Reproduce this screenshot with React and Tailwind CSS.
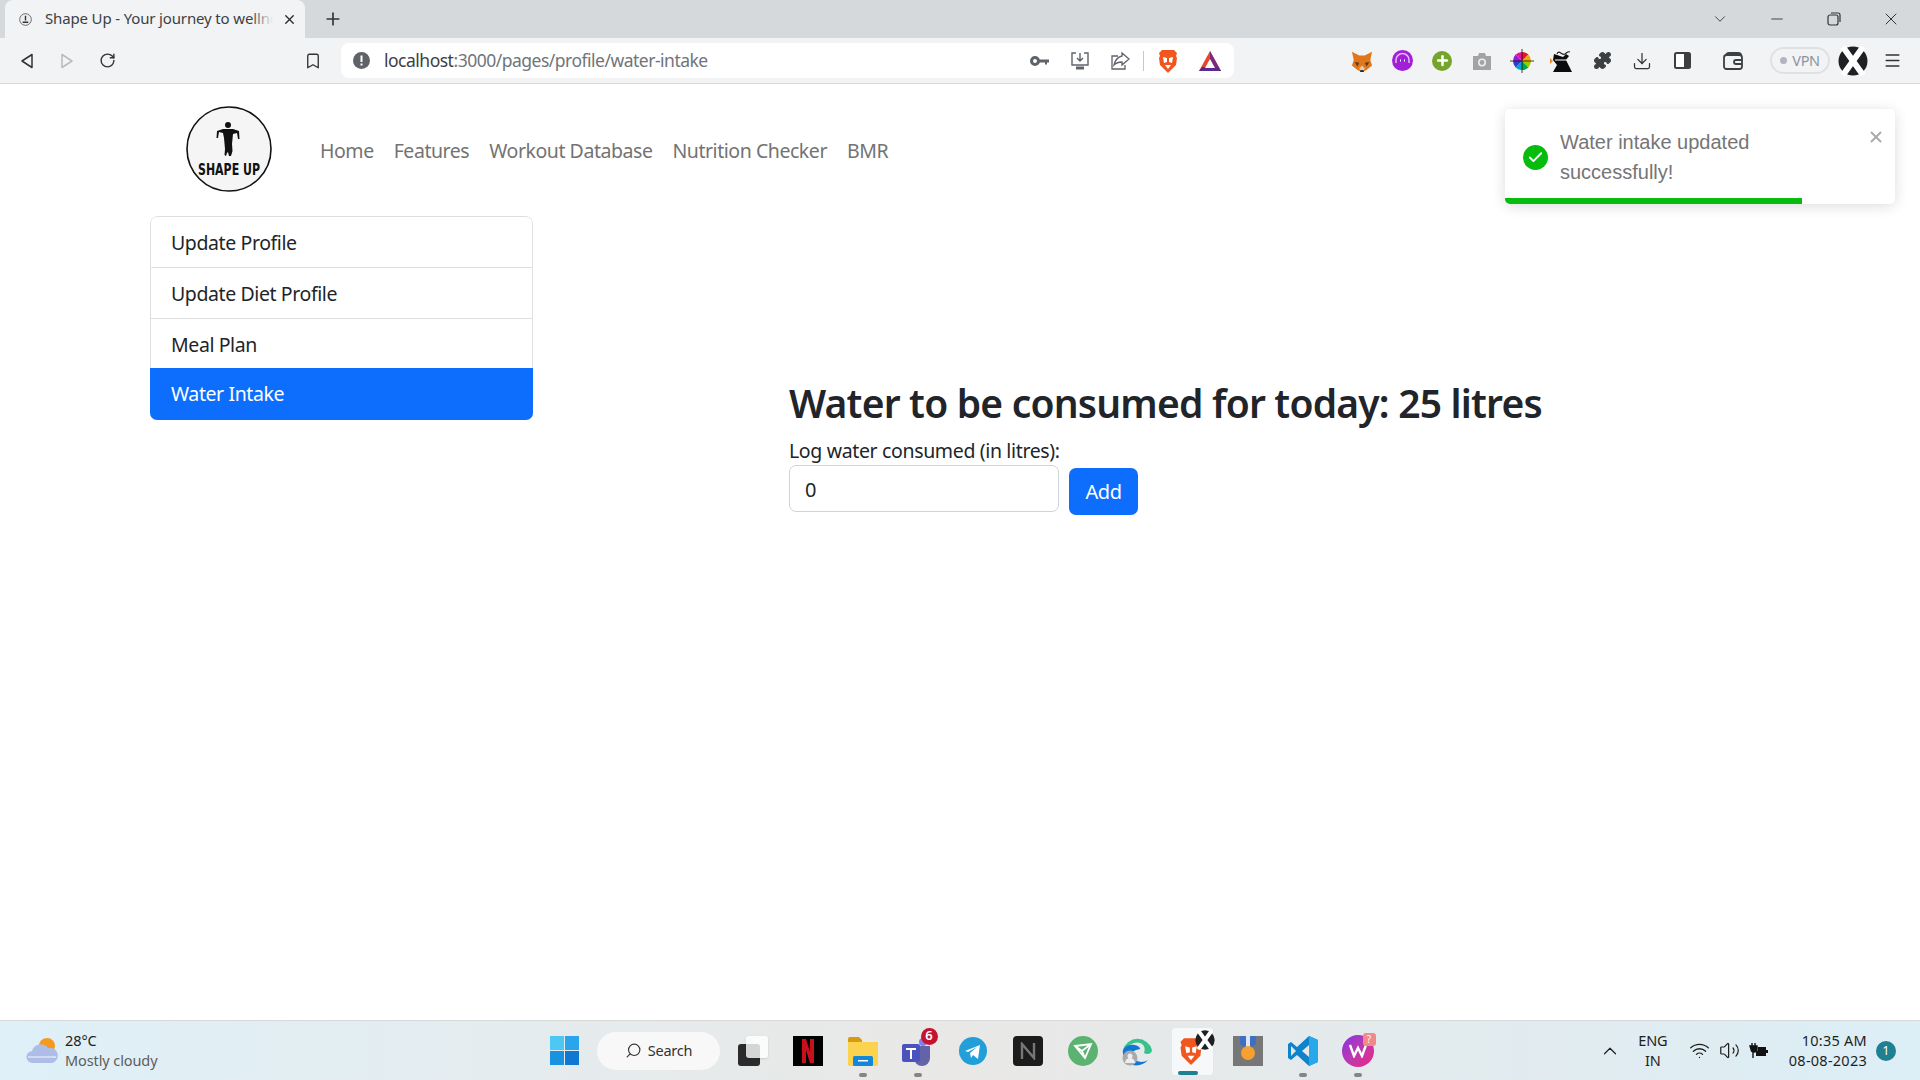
import { X, Plus, Minus, ChevronDown, ChevronUp, RotateCw, Bookmark, Download, Puzzle, Search, Wifi, Volume2, Menu, Check } from "lucide-react";

const uiFont = { fontFamily: '"Noto Sans", sans-serif' };

function Cell({ children, className = "w-[40px]" }) {
  return <div className={`${className} flex shrink-0 items-center justify-center`}>{children}</div>;
}

function Lion({ size = 24 }) {
  return (
    <svg width={size} height={size} viewBox="0 0 24 24">
      <path d="M6 1h12l3 3-1 3 1 2-1 7-8 8-8-8-1-7 1-2-1-3z" fill="#f1561f" />
      <path d="M7 8l4 1v4l-3 1zM17 8l-4 1v4l3 1zM9 16h6l-3 4z" fill="#fff" />
    </svg>
  );
}

function Bat() {
  return (
    <svg width="24" height="24" viewBox="0 0 24 24">
      <path d="M12 2l11 20H1z" fill="#e8462b" />
      <path d="M12 2l11 20h-6L12 11z" fill="#7b2a78" />
      <path d="M1 22l3-4h16l3 4z" fill="#5b2a8c" />
      <path d="M12 10l5 9H7z" fill="#fff" />
    </svg>
  );
}

function Fox() {
  return (
    <svg width="22" height="22" viewBox="0 0 24 24">
      <path d="M1 2l8 4h6l8-4-2 9 2 6-5 4-3 2h-6l-3-2-5-4 2-6z" fill="#e2761b" />
      <path d="M4 13l5 1-2 4zM20 13l-5 1 2 4z" fill="#5c3a21" />
      <path d="M9 20l3-3 3 3-1 3h-4z" fill="#e4c9a8" />
      <path d="M10 22h4v2h-4z" fill="#222" />
    </svg>
  );
}

function Avatar({ size = 30 }) {
  return (
    <svg width={size} height={size} viewBox="0 0 30 30">
      <circle cx="15" cy="15" r="14.5" fill="#1f2024" />
      <path d="M5 1l20 28M25 1L5 29" stroke="#fff" strokeWidth="6" />
    </svg>
  );
}

function Logo() {
  return (
    <svg width="86" height="86" viewBox="0 0 86 86" className="shrink-0">
      <circle cx="43" cy="43" r="42" fill="#f5f5f5" stroke="#111" strokeWidth="1.6" />
      <circle cx="42" cy="19" r="3" fill="#111" />
      <path d="M31 25l6-2h10l6 2 .5 8h-1.5l-1-6-4 1-1 10 .5 7-1.500 5h-2l-1-4-1 1-1 3-1.500-1 .5-6-1-11-1-5-4-1-1 6h-1.500z" fill="#111" />
      <text x="43" y="69" textAnchor="middle" fontFamily='"DejaVu Sans", sans-serif' fontWeight="700" fontSize="16" textLength="62" lengthAdjust="spacingAndGlyphs" fill="#111">
        SHAPE UP
      </text>
    </svg>
  );
}

function TabBar() {
  return (
    <div className="flex h-[38px] shrink-0 items-end bg-[#d5d9dc] pl-[5px]">
      <div className="flex h-[38px] w-[300px] items-center rounded-t-lg bg-[#f2f3f4] pl-[14px]">
        <svg width="13" height="13" viewBox="0 0 14 14" className="shrink-0">
          <circle cx="7" cy="7" r="6.300" fill="#eee" stroke="#666" />
          <path d="M7 3v5M4 10h6" stroke="#333" strokeWidth="1.500" />
        </svg>
        <div className="relative -mt-[2px] ml-[13px] w-[228px] overflow-hidden whitespace-nowrap text-[15px] tracking-[-0.15px] text-[#3c4043]">
          Shape Up - Your journey to wellness
          <div className="absolute inset-y-0 right-0 w-[22px] bg-gradient-to-r from-transparent to-[#f2f3f4]" />
        </div>
        <X size={15} strokeWidth={2.2} className="ml-[9px] text-[#2b2b2b]" />
      </div>
      <Cell className="h-[38px] w-[56px]">
        <Plus size={20} strokeWidth={2} className="text-[#333]" />
      </Cell>
      <div className="ml-auto flex h-[38px] items-center text-[#333]">
        <Cell className="w-[56px]"><ChevronDown size={18} strokeWidth={1.200} /></Cell>
        <Cell className="w-[57px]"><Minus size={18} strokeWidth={1.200} /></Cell>
        <Cell className="w-[57px]">
          <svg width="14" height="14" viewBox="0 0 14 14" fill="none" stroke="#333" strokeWidth="1.200">
            <rect x="1" y="3" width="10" height="10" rx="2" />
            <path d="M4 1h7a2 2 0 0 1 2 2v7" />
          </svg>
        </Cell>
        <Cell className="w-[58px]"><X size={20} strokeWidth={1.200} /></Cell>
      </div>
    </div>
  );
}

function ToolBar() {
  return (
    <div className="flex h-[46px] shrink-0 items-center border-b border-[#d8d8d8] bg-[#f2f3f4] pl-[7px] text-[#3c4043]">
      <Cell>
        <svg width="14" height="16" viewBox="0 0 14 16" fill="none" stroke="#333" strokeWidth="1.500" strokeLinejoin="round"><path d="M12 1.500v13L2 8z" /></svg>
      </Cell>
      <Cell>
        <svg width="14" height="16" viewBox="0 0 14 16" fill="none" stroke="#bbb" strokeWidth="1.500" strokeLinejoin="round"><path d="M2 1.500v13L12 8z" /></svg>
      </Cell>
      <Cell><RotateCw size={17} strokeWidth={2} className="text-[#333]" /></Cell>
      <div className="w-[166px] shrink-0" />
      <Cell><Bookmark size={18} strokeWidth={1.800} className="text-[#333]" /></Cell>
      <div className="ml-[8px] flex h-[35px] w-[893px] shrink-0 items-center rounded-lg bg-white pl-[12px]">
        <svg width="17" height="17" viewBox="0 0 17 17" className="shrink-0">
          <circle cx="8.500" cy="8.500" r="8.500" fill="#5f6368" />
          <path d="M8.500 3.500v6.500M8.500 11.500v2" stroke="#fff" strokeWidth="2" />
        </svg>
        <div className="ml-[14px] whitespace-nowrap text-[17.500px] tracking-[-0.5px] text-[#70757a]">
          <span className="text-[#3c4043]">localhost</span>:3000/pages/profile/water-intake
        </div>
        <div className="ml-auto flex items-center pr-[3px]">
          <Cell>
            <svg width="20" height="12" viewBox="0 0 20 12"><circle cx="5" cy="6" r="3.500" fill="none" stroke="#5f6368" strokeWidth="3" /><path d="M8 4.500h11v3h-2v2h-2v-2H8z" fill="#5f6368" /></svg>
          </Cell>
          <Cell>
            <svg width="20" height="20" viewBox="0 0 20 20" fill="none" stroke="#5f6368" strokeWidth="1.400"><path d="M6 2H2v12h16V2h-4M10 2v8M7 7l3 3 3-3" /><path d="M6 17h8" strokeWidth="3" /></svg>
          </Cell>
          <Cell>
            <svg width="20" height="20" viewBox="0 0 20 20" fill="none" stroke="#5f6368" strokeWidth="1.300"><path d="M8 5H2v13h13v-4M12 2l7 6-7 6v-3c-4 0-6 1-8 3 1-5 4-8 8-9z" /></svg>
          </Cell>
          <div className="mx-[3px] h-[20px] w-px bg-[#c8c8c8]" />
          <Cell className="w-[42px]"><Lion /></Cell>
          <Cell className="w-[42px]"><Bat /></Cell>
        </div>
      </div>
      <div className="w-[108px] shrink-0" />
      <Cell><Fox /></Cell>
      <Cell>
        <svg width="21" height="21" viewBox="0 0 21 21">
          <circle cx="10.500" cy="10.500" r="10.500" fill="#a11fd6" />
          <path d="M4 13V10a6.500 6.500 0 0 1 13 0v3" fill="none" stroke="#e7b8fb" strokeWidth="1.500" />
          <path d="M8 10.500h1M12 10.500h1" stroke="#fff" strokeWidth="1.800" />
        </svg>
      </Cell>
      <Cell><div className="flex size-[20px] items-center justify-center rounded-full bg-[#74a52a]"><Plus size={15} strokeWidth={4} className="text-white" /></div></Cell>
      <Cell>
        <svg width="20" height="18" viewBox="0 0 20 18"><path d="M1 4h5l1-3h6l1 3h5v14H1z" fill="#a3a3a3" /><circle cx="10" cy="10.500" r="4" fill="#eee" /><circle cx="10" cy="10.500" r="2.400" fill="#a3a3a3" /></svg>
      </Cell>
      <Cell>
        <svg width="24" height="24" viewBox="0 0 24 24">
          <path d="M12 12V3a9 9 0 0 1 6.400 2.600z" fill="#e6162d" />
          <path d="M12 12l6.400-6.400A9 9 0 0 1 21 12z" fill="#f5a400" />
          <path d="M12 12h9a9 9 0 0 1-2.600 6.400z" fill="#9acd00" />
          <path d="M12 12l6.400 6.400A9 9 0 0 1 12 21z" fill="#00a651" />
          <path d="M12 12v9a9 9 0 0 1-6.400-2.600z" fill="#00a3d9" />
          <path d="M12 12l-6.400 6.400A9 9 0 0 1 3 12z" fill="#2a3fd1" />
          <path d="M12 12H3a9 9 0 0 1 2.600-6.400z" fill="#8f1fd1" />
          <path d="M12 12L5.600 5.600A9 9 0 0 1 12 3z" fill="#e015a6" />
          <path d="M12 0v24M0 12h24" stroke="#111" strokeWidth="0.800" />
        </svg>
      </Cell>
      <Cell>
        <svg width="24" height="24" viewBox="0 0 24 24">
          <path d="M0 9l3 3-3 3z" fill="#f08a24" />
          <path d="M4 5l9 3 3-3 3 2-3 4 6 12H3l4-7-4-5z" fill="#0c0c0c" />
          <path d="M5 11h12" stroke="#fff" strokeWidth="1" />
          <path d="M7 5c2-5 5 2 8 0s3-3 5-2" fill="none" stroke="#222" strokeWidth="1.200" />
        </svg>
      </Cell>
      <Cell><Puzzle size={19} fill="#3c4043" strokeWidth={1.500} /></Cell>
      <Cell><Download size={20} strokeWidth={1.500} className="text-[#333]" /></Cell>
      <Cell>
        <svg width="17" height="17" viewBox="0 0 17 17"><rect x="1" y="1" width="15" height="15" rx="1.500" fill="#fff" stroke="#3c4043" strokeWidth="2" /><rect x="10" y="1" width="6" height="15" fill="#3c4043" /></svg>
      </Cell>
      <div className="w-[11px] shrink-0" />
      <Cell>
        <svg width="20" height="18" viewBox="0 0 20 18" fill="none" stroke="#3c4043" strokeWidth="1.800"><rect x="1" y="3" width="18" height="14" rx="2.500" /><path d="M3 3c0-1 1-2 3-2h9c2 0 3 1 3 2M19 8h-6a2 2 0 0 0 0 4h6" /></svg>
      </Cell>
      <div className="ml-[17px] flex h-[27px] w-[60px] shrink-0 items-center justify-center gap-[5px] rounded-full border-2 border-[#dfe1e3] text-[14.500px] tracking-[-0.4px] text-[#8a93a3]">
        <span className="size-[7px] rounded-full bg-[#b0b5c0]" />VPN
      </div>
      <div className="ml-[3px]"><Cell><Avatar /></Cell></div>
      <Cell className="w-[39px]"><Menu size={19} strokeWidth={1.800} className="text-[#333]" /></Cell>
    </div>
  );
}

function Toast() {
  return (
    <div className="absolute right-[25px] top-[25px] flex h-[95px] w-[390px] overflow-hidden rounded-[5px] bg-white shadow-[0_2px_14px_rgba(0,0,0,0.14)]" style={{ fontFamily: '"Liberation Sans", Arial, sans-serif' }}>
      <div className="flex h-[89px] w-full pl-[18px]">
        <div className="mt-[36px] flex size-[25px] shrink-0 items-center justify-center rounded-full bg-[#07bc0c]">
          <Check size={17} strokeWidth={2.600} className="text-white" />
        </div>
        <div className="ml-[12px] mt-[18px] w-[250px] text-[20px] leading-[30px] text-[#757575]">
          Water intake updated successfully!
        </div>
        <X size={18} strokeWidth={2.600} className="ml-auto mr-[10px] mt-[19px] text-[#aaaaaa]" />
      </div>
      <div className="absolute bottom-0 left-0 h-[6px] w-[297px] bg-[#07bc0c]" />
    </div>
  );
}

function SideMenu() {
  const items = ["Update Profile", "Update Diet Profile", "Meal Plan"];
  return (
    <div className="h-[204px] w-[383px] shrink-0 overflow-hidden rounded-[7px] text-[19.500px] tracking-[-0.4px] text-[#212529]">
      {items.map((item, i) => (
        <div key={item} className={`flex items-center border-x border-[#dfdfdf] pl-[20px] pt-[2px] ${i === 0 ? "border-t" : ""} ${i < 2 ? "border-b" : ""} ${i === 0 ? "h-[52px] rounded-t-[7px]" : i === 1 ? "h-[51px]" : "h-[49px]"}`}>
          {item}
        </div>
      ))}
      <div className="flex h-[52px] items-center bg-[#0d6efd] pl-[21px] text-white">Water Intake</div>
    </div>
  );
}

function WaterForm() {
  return (
    <div className="ml-[256px] mt-[163px] text-[#212529]">
      <h2 className="whitespace-nowrap text-[39px] font-semibold leading-[48px] tracking-[-0.8px]">Water to be consumed for today: 25 litres</h2>
      <div className="mt-[12px] text-[19.500px] leading-[24px] tracking-[-0.35px]">Log water consumed (in litres):</div>
      <div className="mt-[2px] flex items-start">
        <div className="flex h-[47px] w-[270px] items-center rounded-[7px] border border-[#ced4da] pl-[15px] pt-[2px] text-[20px]">0</div>
        <button className="ml-[10px] mt-[3px] h-[47px] w-[69px] rounded-[7px] bg-[#0d6efd] pt-[1px] text-[20px] tracking-[-0.5px] text-white">Add</button>
      </div>
    </div>
  );
}

function Pill() {
  return <div className="mx-auto mt-[1px] h-[4px] w-[8px] rounded-full bg-[#858585]" />;
}

function TaskIcon({ children, pill }) {
  return (
    <div className="relative flex h-[58px] w-[55px] shrink-0 items-center justify-center">
      {children}
      {pill && <div className="absolute bottom-[3px] left-0 right-0"><Pill /></div>}
    </div>
  );
}

function TaskBar() {
  return (
    <div className="flex h-[60px] shrink-0 items-center border-t border-[#d9d9d9] bg-gradient-to-r from-[#dff0f8] via-[#e9e8e6] to-[#dceef6]">
      <div className="flex w-[550px] shrink-0 items-center pl-[26px]">
        <svg width="32" height="30" viewBox="0 0 32 30">
          <circle cx="21" cy="10" r="8" fill="#f39a1f" />
          <path d="M7 27a6 6 0 0 1-1-12 9 9 0 0 1 16-3 7 7 0 0 1 4 15z" fill="#aebde8" />
          <path d="M2 21h28" stroke="#dfe6f6" strokeWidth="1.500" />
        </svg>
        <div className="-mt-[2px] ml-[7px] text-[14.500px] leading-[20px] tracking-[-0.1px]">
          <div className="text-[#1f1f1f]">28°C</div>
          <div className="text-[#5c5c5c]">Mostly cloudy</div>
        </div>
      </div>
      <div className="grid size-[29px] shrink-0 grid-cols-2 gap-[1px]">
        <div className="bg-[#4cc8f4]" /><div className="bg-[#2aa5ec]" /><div className="bg-[#1a92e2]" /><div className="bg-[#0f78d4]" />
      </div>
      <div className="ml-[18px] flex h-[38px] w-[123px] shrink-0 items-center justify-center gap-[6px] rounded-full bg-[#f8f8f8] text-[14.500px] tracking-[-0.2px] text-[#333]">
        <Search size={17} strokeWidth={1.600} className="-scale-x-100" />Search
      </div>
      <div className="ml-[5px] flex items-center">
        <TaskIcon>
          <div className="relative size-[30px]">
            <div className="absolute bottom-0 left-0 size-[22px] rounded-[3px] bg-[#2b2b2b]" />
            <div className="absolute right-0 top-0 size-[22px] rounded-[3px] bg-white/80 shadow-sm" />
          </div>
        </TaskIcon>
        <TaskIcon>
          <div className="flex h-[30px] w-[30px] items-center justify-center bg-black">
            <svg width="14" height="24" viewBox="0 0 14 24"><path d="M1 0h4l4 13V0h4v24H9L5 11v13H1z" fill="#c8101d" /></svg>
          </div>
        </TaskIcon>
        <TaskIcon pill>
          <svg width="30" height="30" viewBox="0 0 30 30">
            <path d="M0 3a2 2 0 0 1 2-2h9l3 3v6H0z" fill="#d99a10" />
            <path d="M0 6h30v22a2 2 0 0 1-2 2H2a2 2 0 0 1-2-2z" fill="#fbd34e" />
            <rect x="5" y="20" width="20" height="10" rx="1.500" fill="#1387d9" />
            <rect x="10" y="24" width="10" height="1.500" fill="#fff" />
          </svg>
        </TaskIcon>
        <TaskIcon pill>
          <div className="relative h-[30px] w-[34px]">
            <svg width="34" height="30" viewBox="0 0 34 30">
              <circle cx="22" cy="6" r="4" fill="#7b83eb" />
              <path d="M13 10h16v12a8 8 0 0 1-16 0z" fill="#6264a7" />
              <rect x="1" y="8" width="18" height="18" rx="2" fill="#4b53bc" />
              <path d="M5 12h10v2h-4v9H9v-9H5z" fill="#fff" />
            </svg>
            <div className="absolute -right-[3px] -top-[8px] flex size-[17px] items-center justify-center rounded-full bg-[#c4122f] text-[13px] font-semibold text-white">6</div>
          </div>
        </TaskIcon>
        <TaskIcon>
          <svg width="28" height="28" viewBox="0 0 28 28">
            <circle cx="14" cy="14" r="14" fill="#229ed9" />
            <path d="M6 14l15-6-2 14-5-4-2 3-1-5 7-6-9 5z" fill="#fff" />
          </svg>
        </TaskIcon>
        <TaskIcon>
          <div className="flex size-[30px] items-center justify-center rounded-[4px] bg-[#1c1c1c]">
            <svg width="18" height="18" viewBox="0 0 18 18" fill="none" stroke="#777" strokeWidth="2.400"><path d="M3 17V2l12 14V1" /></svg>
          </div>
        </TaskIcon>
        <TaskIcon>
          <svg width="30" height="30" viewBox="0 0 30 30">
            <circle cx="15" cy="15" r="15" fill="#5cb270" />
            <path d="M7 10l16-2-6 14z M7 10l7 5 9-7M14 15l3 7" fill="none" stroke="#fff" strokeWidth="1.800" />
          </svg>
        </TaskIcon>
        <TaskIcon>
          <svg width="31" height="31" viewBox="0 0 31 31">
            <path d="M1 15a15 15 0 0 1 29 0c0 4-5 5-8 3 3-8-4-12-10-10C7 10 3 12 1 15z" fill="#37c28c" />
            <path d="M1 15c3-6 13-7 17-2 1 2-5 1-7 4-2 4 1 9 8 10 3 0 5-1 7-2-4 5-12 7-18 4C3 27 0 20 1 15z" fill="#0f78d4" />
            <circle cx="8" cy="23" r="7.500" fill="#aaa" />
            <circle cx="8" cy="21" r="2.500" fill="#eee" />
            <path d="M3 28a5 5 0 0 1 10 0z" fill="#eee" />
          </svg>
        </TaskIcon>
        <div className="relative flex h-[58px] w-[55px] shrink-0 items-center justify-center">
          <div className="absolute left-[6px] top-[5px] h-[49px] w-[43px] rounded-[4px] border border-[#e4e8ea] bg-[#f6f8f9]" />
          <div className="relative -ml-[3px]"><Lion size={28} /></div>
          <div className="absolute left-[30px] top-[8px]"><Avatar size={20} /></div>
          <div className="absolute bottom-[5px] left-[13px] h-[4px] w-[20px] rounded-full bg-[#1f8091]" />
        </div>
        <TaskIcon>
          <div className="flex size-[30px] justify-center bg-[#777]">
            <svg width="20" height="26" viewBox="0 0 20 26"><path d="M2 0h16v8l-5 4H7L2 8z" fill="#3d6fc4" /><path d="M8 0h4v11H8z" fill="#dfe6f6" /><circle cx="10" cy="17" r="7" fill="#f5a030" /></svg>
          </div>
        </TaskIcon>
        <TaskIcon pill>
          <svg width="30" height="30" viewBox="0 0 30 30">
            <path d="M21 0l9 4v22l-9 4-12-11-6 5-3-2v-14l3-2 6 5z" fill="#0f82cc" />
            <path d="M21 0l9 4v22l-9 4z" fill="#28a8ea" />
            <path d="M21 9l-7 6 7 6z" fill="#e9e8e6" />
            <path d="M3 10l5 5-5 5z" fill="#e9e8e6" />
          </svg>
        </TaskIcon>
        <TaskIcon pill>
          <div className="relative size-[32px]">
            <div className="flex size-[32px] items-center justify-center rounded-full bg-gradient-to-br from-[#8a2be2] to-[#f0157a]">
              <svg width="18" height="14" viewBox="0 0 18 14" fill="none" stroke="#fff" strokeWidth="2.400"><path d="M1 1l4 11 4-8 4 8 4-11" /></svg>
            </div>
            <div className="absolute -right-[2px] -top-[2px] flex size-[13px] items-center justify-center rounded-[3px] bg-[#f08a8a] text-[10px] leading-none text-white">?</div>
          </div>
        </TaskIcon>
      </div>
      <div className="ml-auto flex items-center text-[#1f1f1f]">
        <ChevronUp size={22} strokeWidth={1.300} />
        <div className="-mt-[2px] ml-[9px] w-[46px] text-center text-[14.500px] leading-[20px] tracking-[-0.2px]">ENG<br />IN</div>
        <Wifi size={21} strokeWidth={1.500} className="ml-[13px]" />
        <Volume2 size={21} strokeWidth={1.400} className="ml-[9px]" />
        <svg width="20" height="16" viewBox="0 0 20 16" className="ml-[9px]">
          <path d="M3 0v3M6 0v3M1 3h7v3a3 3 0 0 1-6 0zM4 9v6" stroke="#111" strokeWidth="1.400" fill="#111" />
          <path d="M9 4h8v3h2v3h-2v3H7V9l2-2z" fill="#111" />
        </svg>
        <div className="-mt-[2px] ml-[20px] text-right text-[14.500px] leading-[20px] tracking-[0.25px]">10:35 AM<br />08-08-2023</div>
        <div className="ml-[9px] mr-[24px] flex size-[20px] items-center justify-center rounded-full bg-[#1f8091] text-[12px] text-white">1</div>
      </div>
    </div>
  );
}

export default function App() {
  const navLinks = ["Home", "Features", "Workout Database", "Nutrition Checker", "BMR"];
  return (
    <div className="flex h-screen flex-col overflow-hidden bg-white" style={uiFont}>
      <TabBar />
      <ToolBar />
      <div className="relative flex-1">
        <Toast />
        <div className="flex pl-[186px] pt-[22px]">
          <Logo />
          <nav className="ml-[48px] mt-[4px] flex items-center gap-[20px] text-[19.500px] tracking-[-0.45px] text-[#737373]">
            {navLinks.map((link) => (
              <span key={link} className="whitespace-nowrap">{link}</span>
            ))}
          </nav>
        </div>
        <div className="mt-[24px] flex pl-[150px]">
          <SideMenu />
          <WaterForm />
        </div>
      </div>
      <TaskBar />
    </div>
  );
}
